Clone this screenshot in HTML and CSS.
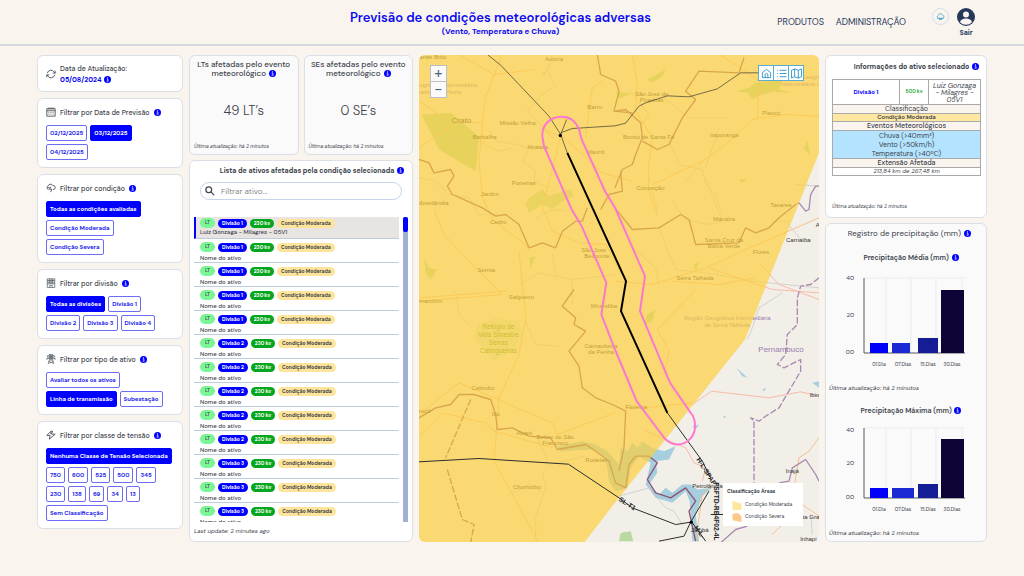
FILE: index.html
```html
<!DOCTYPE html>
<html lang="pt-BR">
<head>
<meta charset="utf-8">
<meta name="viewport" content="width=device-width, initial-scale=1">
<title>Previsão de condições meteorológicas adversas</title>
<link rel="stylesheet" href="styles.css">
</head>
<body>
<svg class="sprite" aria-hidden="true">
  <symbol id="info" viewBox="0 0 12 12"><circle cx="6" cy="6" r="6" fill="#00f"/><circle cx="6" cy="3.2" r="1" fill="#fff"/><path d="M4.6 5.2H6.7V8.6M4.4 8.9H7.8" stroke="#fff" stroke-width="1.2" fill="none"/></symbol>
  <symbol id="refresh" viewBox="0 0 24 24"><path d="M3 10A9.3 9.3 0 0 1 20 7.5L22 10M22 4V10H16M21 14A9.3 9.3 0 0 1 4 16.500L2 14M2 20V14H8"/></symbol>
  <symbol id="calendar" viewBox="0 0 24 24"><path d="M2 4H22V22H2ZM2 9H22M7 1V6M12 1V6M17 1V6M6 13H8M11 13H13M16 13H18M6 17H8M11 17H13M16 17H18"/></symbol>
  <symbol id="storm" viewBox="0 0 24 24"><path d="M6 16A5 5 0 0 1 5 7A6 6 0 0 1 16 6A5 5 0 0 1 19 15.500H17M12 9L8 15H14L11 22M5 11H9"/></symbol>
  <symbol id="building" viewBox="0 0 24 24"><path d="M3 2H21V23H3ZM3 6H21M3 10H21M3 14H21M8 2V14M12 2V14M16 2V14M9 23V18H15V23" stroke-width="1.500"/></symbol>
  <symbol id="tower" viewBox="0 0 24 24"><path d="M3 5L9 1H15L21 5ZM2 11L9 7H15L22 11ZM9 1V11L5 23M15 1V11L19 23M9 1L15 7M15 1L9 7L15 11M15 7L9 11L17 18L5 23M15 11L7 18L19 23M3 5V8M21 5V8M2 11V14M22 11V14" stroke-width="1.300"/></symbol>
  <symbol id="bolt" viewBox="0 0 24 24"><path d="M13 2L2 13H10L8 22L22 10H13L16 2M13 2L11 9"/></symbol>
</svg>

<header class="topbar">
  <div class="topbar-title">
    <h1>Previsão de condições meteorológicas adversas</h1>
    <p>(Vento, Temperatura e Chuva)</p>
  </div>
  <div class="topbar-actions">
    <nav class="menu"><a href="#">PRODUTOS</a><a href="#">ADMINISTRAÇÃO</a></nav>
    <div class="account">
      <button class="cloud-btn" type="button" aria-label="Clima"><svg viewBox="0 0 24 24"><path d="M6 17A4.500 4.500 0 0 1 6 9A6 6 0 0 1 17.500 8.500A4.500 4.500 0 0 1 18.500 17Z" fill="none" stroke="#3a9cc8" stroke-width="2"/><path d="M4 17H20M8 20H16" stroke="#3a9cc8" stroke-width="2"/></svg></button>
      <a class="logout" href="#"><svg viewBox="0 0 24 24"><circle cx="12" cy="12" r="12" fill="#253858"/><circle cx="12" cy="8.500" r="4" fill="#fbf5f1"/><path d="M4 19C5 12.500 19 12.500 20 19C16 23.500 8 23.500 4 19Z" fill="#fbf5f1"/></svg>Sair</a>
    </div>
  </div>
</header>

<main class="dashboard">
  <aside class="filters">
    <section class="card update">
      <svg class="icon"><use href="#refresh"/></svg>
      <div>Data de Atualização:<br><b>05/08/2024</b> <svg class="info"><use href="#info"/></svg></div>
    </section>
    <section class="card filter">
      <h2><svg class="icon"><use href="#calendar"/></svg>Filtrar por Data de Previsão <svg class="info"><use href="#info"/></svg></h2>
      <div class="chips narrow"><button>02/12/2025</button><button class="on">03/12/2025</button><button>04/12/2025</button></div>
    </section>
    <section class="card filter">
      <h2><svg class="icon"><use href="#storm"/></svg>Filtrar por condição <svg class="info"><use href="#info"/></svg></h2>
      <div class="chips stacked"><button class="on">Todas as condições avaliadas</button><button>Condição Moderada</button><button>Condição Severa</button></div>
    </section>
    <section class="card filter">
      <h2><svg class="icon"><use href="#building"/></svg>Filtrar por divisão <svg class="info"><use href="#info"/></svg></h2>
      <div class="chips"><button class="on">Todas as divisões</button><button>Divisão 1</button><button>Divisão 2</button><button>Divisão 3</button><button>Divisão 4</button></div>
    </section>
    <section class="card filter">
      <h2><svg class="icon"><use href="#tower"/></svg>Filtrar por tipo de ativo <svg class="info"><use href="#info"/></svg></h2>
      <div class="chips"><button>Avaliar todos os ativos</button><button class="on">Linha de transmissão</button><button>Subestação</button></div>
    </section>
    <section class="card filter">
      <h2><svg class="icon"><use href="#bolt"/></svg>Filtrar por classe de tensão <svg class="info"><use href="#info"/></svg></h2>
      <div class="chips voltage"><button class="on">Nenhuma Classe de Tensão Selecionada</button><button>750</button><button>600</button><button>525</button><button>500</button><button>345</button><button>230</button><button>138</button><button>69</button><button>34</button><button>13</button><button>Sem Classificação</button></div>
    </section>
  </aside>

  <div class="assets">
    <div class="stats">
      <section class="card stat"><h2>LTs afetadas pelo evento meteorológico <svg class="info"><use href="#info"/></svg></h2><p class="value">49 LT’s</p><p class="stamp">Última atualização: há 2 minutos</p></section>
      <section class="card stat"><h2>SEs afetadas pelo evento meteorológico <svg class="info"><use href="#info"/></svg></h2><p class="value">0 SE’s</p><p class="stamp">Última atualização: há 2 minutos</p></section>
    </div>
    <section class="card list-card">
      <h2>Lista de ativos afetadas pela condição selecionada <svg class="info"><use href="#info"/></svg></h2>
      <label class="search"><svg viewBox="0 0 24 24"><circle cx="9" cy="9" r="7"/><path d="M14 14L22 22"/></svg><input type="text" placeholder="Filtrar ativo..." aria-label="Filtrar ativo"></label>
      <div class="scroller">
        <ul id="asset-list"></ul>
        <div class="track"><div class="thumb"></div></div>
      </div>
      <p class="stamp">Last update: 2 minutes ago</p>
    </section>
  </div>

  <section class="map" aria-label="Mapa">
    <svg class="map-canvas" viewBox="0 0 1200 1464" preserveAspectRatio="xMidYMid slice">
      <rect width="1200" height="1464" fill="#f2efe9"/>
      <g class="green">
        <path d="M8 180L95 175L180 245L170 350L60 285Z"/>
        <path d="M330 430L370 405L390 425L420 415L455 405L465 425L430 440L400 465L370 450L330 475L320 450Z" opacity=".8"/>
        <path d="M180 810L230 790L300 800L310 840L280 890L220 920L190 880L160 850Z" opacity=".3"/>
        <path d="M950 110L990 100L1010 85L1090 75L1080 105L1120 115L1060 112L1030 120L1000 135L985 115Z"/>
        <path d="M370 55L382 48L375 62ZM685 75L740 45L730 65L700 85ZM590 110L640 118L600 132ZM1165 255L1172 300L1155 285ZM960 375L988 372L968 385ZM685 780L710 765L700 800L675 810ZM15 610L30 640L55 645L35 675L20 655ZM330 610L350 605L335 640ZM825 630L840 620L830 650Z"/>
        <path d="M605 1435L635 1430L643 1460L600 1460Z"/>
      </g>
      <g class="water">
        <path d="M415 1175L490 1160L530 1170L565 1190L600 1230L605 1180L625 1190L640 1165L655 1180L670 1160L700 1180L735 1190L770 1175L750 1215L710 1220L715 1255L690 1290L720 1320L740 1300L760 1315L790 1290L815 1290L835 1305L880 1300L850 1325L830 1380L840 1460L820 1460L812 1340L800 1310L760 1345L710 1330L680 1290L695 1225L660 1205L635 1240L625 1300L590 1310L570 1280L560 1210L520 1185L425 1190Z"/>
        <path d="M952 940L975 960L985 970L970 965ZM1180 985L1200 980V1000ZM1030 1005L1042 1000L1035 1010ZM820 1115L840 1110L830 1125ZM912 1085L920 1085L918 1092Z"/>
      </g>
      <g class="minor">
        <path d="M400 0L385 50L410 95L370 120L325 170L370 215L400 250M210 230L230 260L270 265L330 280L310 320L350 350L345 380L390 400M130 190L95 250L180 260L240 290L280 280"/>
        <path d="M0 370L50 380L90 420L150 430L180 480L240 480M350 490L390 470L420 465L440 470M300 690L360 655L460 675L590 660M400 600L410 660M460 670V750M320 800L350 870L420 875M110 710L120 780L150 810M370 1250L380 1300L350 1390V1450M270 1320L330 1290L370 1315M355 1150L390 1230L500 1205"/>
        <path d="M630 105L690 180L670 210M735 130L810 190L930 190M750 260L780 330L850 345L860 390L890 420L900 450L910 475M860 340L880 280L900 220M700 410L715 470L710 490M850 320L800 380M860 370L910 500L870 510L800 495L760 440M720 520L750 600L770 645L900 660M655 590L710 640L720 690M1130 390L1200 395M1060 500L1100 500L1150 560M890 660L1000 680L1100 690L1200 700"/>
        <path d="M600 1325L690 1300L740 1360L765 1370L790 1410M1175 1380L1180 1440M1090 715L1020 760L1000 820L985 855"/>
      </g>
      <g class="roads">
        <path d="M0 280L120 200L190 205L200 125L250 0M120 0L225 60L350 45M190 210L180 320L190 430L225 500L320 570L330 590M0 140L90 200M45 465L75 540L150 620L250 720L0 740M370 225L425 245L388 390L370 460L400 530L480 565L560 570L620 680M425 240L550 355L640 380M500 250L520 100L550 80M640 0L655 90L650 170L700 250L688 340L690 410L710 470M700 390L850 320L920 270L1000 195L1100 180L1200 185M1015 190L1020 80L950 30L900 0M300 590L310 690L320 790L300 900L240 1030L225 1220L360 1465M0 1080L120 985L400 1105L415 1140L588 1075M0 1145L70 1075L200 1105L225 1130L400 1180M588 680L700 690L860 640L970 590L1200 490M760 680L900 690L1010 670M620 1060L680 1060L820 1045M830 705L715 825L750 890L735 960M0 730L130 720L260 710"/>
      </g>
      <g class="pinkroads"><path d="M680 1130L800 1180L825 1225L860 1240L850 1280M820 1050L878 1010L1050 1030L1145 1012L1200 1025M1020 625L1080 690L1200 735M870 640L1060 705L1200 715"/></g>
      <g class="roads"><path d="M1200 1150L1170 1190L1140 1210L1120 1330L1100 1400L1060 1440M1150 1350L1200 1385M830 1460L850 1320L880 1290"/></g>
      <g class="bounds">
        <path d="M0 315L30 325L45 355L95 345L105 365L85 395L100 420L145 440L190 460L230 485L260 480L300 510L330 580L345 575L370 565L410 580L430 530L470 500L490 500L505 460"/>
        <path d="M535 0L545 60L590 80L600 110L585 170L640 175M588 170L620 165L665 205L670 250L650 300L640 330L610 345L588 400M670 260L715 285L750 270L790 190L830 135L800 110L840 50L960 55L975 10"/>
        <path d="M545 465L570 420L610 410L605 350M588 460L640 525L720 520L785 480L810 495L830 570L960 565L980 520L1010 535L1050 520L1080 490L1130 450"/>
        <path d="M465 705L430 755L470 790L465 810L500 830L450 890L480 935L490 1000L530 1030L580 1050L620 1070L615 1180L600 1250"/>
        <path d="M0 1090L50 1060L95 1050L120 1020L165 1020L215 1035L230 1080L235 1125L280 1120L330 1145L395 1150L415 1185L500 1170L530 1190L570 1220L590 1285L620 1300L630 1230L650 1205L690 1205L715 1225L685 1275L710 1315L755 1330L800 1300L830 1340L810 1370L830 1460"/>
        <path class="dash" d="M155 1035L80 1210M85 1245L130 1395L165 1410L155 1465"/>
      </g>
      <g class="violet">
        <path d="M1130 450L1140 445L1160 470L1170 465L1175 420L1190 395L1200 395"/>
        <path class="dash" d="M1200 670L1175 690L1145 695L1135 730V810L1105 840L1100 900L1075 930L1095 940L1145 915V950L1080 1060L1040 1085L1020 1100L995 1090L1005 1100V1330"/>
        <path d="M1080 1285L1110 1280L1120 1240L1160 1215L1190 1260L1200 1280"/>
        <path d="M905 1465L950 1425L985 1415"/>
      </g>
      <g class="places">
        <text x="36" y="12">Farias Brito</text><text x="405" y="20">Aurora</text><text x="527" y="163">Barro</text><text x="127" y="206" font-size="24">Crato</text><text x="296" y="212">Missão Velha</text><text x="197" y="252">Barbalha</text><text x="356" y="283">Abaiara</text><text x="530" y="299">Mauriti</text><text x="314" y="392">Porteiras</text><text x="212" y="424">Jardim</text><text x="42" y="452">Moreilândia</text><text x="238" y="508">Cedro</text><text x="524" y="591">São Jose</text><text x="534" y="609">Belmonte</text><text x="202" y="652">Serrita</text><text x="307" y="732">Salgueiro</text>
        <text x="698" y="123">São José de</text><text x="698" y="141">Piranhas</text><text x="689" y="254">Bonito de Santa Fé</text><text x="916" y="248">Itaporanga</text><text x="1057" y="181">Piancó</text><text x="694" y="406">Conceição</text><text x="1086" y="457">Tavares</text><text x="915" y="500">Manaíra</text><text x="915" y="563">Santa Cruz da</text><text x="915" y="581">Baixa Verde</text><text x="1026" y="598">Flores</text><text x="828" y="677">Serra Talhada</text><text x="1138" y="563">Carnaíba</text>
        <text x="555" y="761">Mirandiba</text><text x="24" y="744">Parnamirim</text><text x="546" y="879">Carnaubeira</text><text x="546" y="897">da Penha</text><text x="192" y="1007">Cabrobó</text><text x="10" y="1074">Orocó</text><text x="231" y="1083">Ibó</text><text x="316" y="1142">Abaré</text><text x="409" y="1152">Belém do São</text><text x="409" y="1170">Francisco</text><text x="532" y="1222">Rodelas</text><text x="324" y="1304">Chorrochó</text><text x="652" y="1062">Floresta</text><text x="865" y="1299">Petrolândia</text><text x="842" y="1433">Jatobá</text><text x="1120" y="1256">Inajá</text><text class="from" x="1172" y="1026">Ibimirim</text><text class="from" x="1126" y="1393">Mata Grande</text><text x="1168" y="1459">Inhapi</text><text class="from" x="1190" y="518">Afogados</text>
      </g>
      <g class="region">
        <text class="to" x="175" y="97">Região Geográfica Intermediária</text><text class="to" x="128" y="118">de Juazeiro do Norte</text>
        <text x="925" y="797">Região Geográfica Intermediária</text><text x="925" y="818">de Serra Talhada</text>
        <text class="from" x="1084" y="73">Região Geográfica</text><text class="from" x="1084" y="94">Intermediária de</text>
        <text x="1086" y="893" font-size="24">Pernambuco</text>
      </g>
      <g class="reserve"><text x="238" y="824">Refúgio de</text><text x="238" y="847">Vida Silvestre</text><text x="238" y="871">Serras</text><text x="238" y="894">Catingueiras</text></g>
      <path d="M0 0H1200V295L1025 735L978 855L588 1345L496 1464H0Z" fill="#fecf3b" opacity=".68"/>
      <g class="lines">
        <path d="M205 0L245 32L390 185L425 240L445 295M425 240L443 195M425 235L460 222L588 214L620 206L660 155L680 145L745 124L810 127L895 103L965 55H1020" opacity=".65"/>
        <path d="M0 1222L180 1212L448 1229L600 1330L640 1360L770 1410L815 1403M745 1075L850 1220L875 1270M720 1460L795 1445L815 1403L870 1310M875 1380H1000M820 1405L860 1460"/>
        <path class="selected" d="M445 295L621 680L606 770L745 1075"/>
        <circle cx="424" cy="243" r="5"/><circle cx="817" cy="1403" r="5"/>
      </g>
      <path class="buffer" d="M428 187C390 187 368 215 370 245L375 275L458 465L488 515L562 685L547 780L588 885L653 1040L728 1140C745 1165 760 1170 775 1170C805 1170 828 1145 828 1115C828 1098 825 1085 815 1075L753 985L663 770L678 665L588 460L558 410L488 255L480 225C470 200 450 187 428 187Z"/>
      <g class="line-names">
        <text transform="translate(832 1215) rotate(58)">H-L-SPAF</text>
        <text transform="translate(886 1283) rotate(90)">FSFTD-RB4F02-4L</text>
        <text transform="translate(598 1338) rotate(33)">SL-T1</text>
        <text transform="translate(825 1420) rotate(55)">H-L-</text>
      </g>
    </svg>
    <div class="zoom"><button type="button">+</button><button type="button">−</button></div>
    <div class="tools">
      <button type="button" aria-label="Início"><svg viewBox="0 0 24 24"><path d="M3 10L12 3L21 10V21H3ZM9 21V15A3 3 0 0 1 15 15V21"/></svg></button>
      <button type="button" aria-label="Legenda"><svg viewBox="0 0 24 24"><path d="M2 5H4M8 5H23M2 12H4M8 12H23M2 19H4M8 19H23"/></svg></button>
      <button type="button" aria-label="Camadas"><svg viewBox="0 0 24 24"><path d="M1 5L8 2L16 5L23 2V19L16 22L8 19L1 22ZM8 2V19M16 5V22"/></svg></button>
    </div>
    <div class="legend">
      <h3>Classificação Áreas</h3>
      <p><svg viewBox="0 0 10 10"><path d="M0 0L10 3V10H0Z" fill="#fde69b"/></svg>Condição Moderada</p>
      <p><svg viewBox="0 0 10 10"><path d="M0 1L6 0L10 4V10L0 8Z" fill="#fdc78a"/></svg>Condição Severa</p>
    </div>
  </section>

  <div class="details">
    <section class="card info-card">
      <h2>Informações do ativo selecionado <svg class="info"><use href="#info"/></svg></h2>
      <table>
        <colgroup><col class="c-div"><col class="c-kv"><col></colgroup>
        <tbody>
          <tr class="asset"><td class="division">Divisão 1</td><td class="kv">500 kv</td><td class="name">Luiz Gonzaga - Milagres - 05V1</td></tr>
          <tr><td class="label" colspan="3">Classificação</td></tr>
          <tr><td class="moderate" colspan="3">Condição Moderada</td></tr>
          <tr><td class="label strong" colspan="3">Eventos Meteorológicos</td></tr>
          <tr><td class="events" colspan="3">Chuva (&gt;40mm³)<br>Vento (&gt;50km/h)<br>Temperatura (&gt;40ºC)</td></tr>
          <tr><td class="label strong" colspan="3">Extensão Afetada</td></tr>
          <tr><td class="extent" colspan="3">213,84 km de 267,48 km</td></tr>
        </tbody>
      </table>
      <p class="stamp">Última atualização: há 2 minutos</p>
    </section>
    <section class="card rain-card">
      <h2>Registro de precipitação (mm) <svg class="info"><use href="#info"/></svg></h2>
      <h3>Precipitação Média (mm) <svg class="info"><use href="#info"/></svg></h3>
      <svg class="chart" viewBox="0 2 148 98" role="img" aria-label="Precipitação média">
        <path class="grid" d="M32 10H133M54 10V85M79 10V85M104 10V85M130 10V85"/>
        <path class="axis" d="M32 10V85H133"/>
        <g class="ticks"><text x="22" y="12">40</text><text x="22" y="49">20</text><text x="22" y="86">00</text></g>
        <path fill="#0000fa" d="M38 75H56V85H38Z"/><path fill="#1c28d4" d="M60 75H78V85H60Z"/><path fill="#141c96" d="M86 70H106V85H86Z"/><path fill="#0f0438" d="M109 22H132V85H109Z"/>
        <g class="days"><text x="47" y="98">01.Dia</text><text x="71" y="98">07.Dias</text><text x="96" y="98">15.Dias</text><text x="120" y="98">30.Dias</text></g>
      </svg>
      <p class="stamp">Última atualização: há 2 minutos</p>
      <h3>Precipitação Máxima (mm) <svg class="info"><use href="#info"/></svg></h3>
      <svg class="chart" viewBox="0 10 148 90" role="img" aria-label="Precipitação máxima">
        <path class="grid" d="M32 15H133M54 15V85M79 15V85M104 15V85M130 15V85"/>
        <path class="axis" d="M32 15V85H133"/>
        <g class="ticks"><text x="22" y="19">40</text><text x="22" y="52">20</text><text x="22" y="86">00</text></g>
        <path fill="#0000fa" d="M38 75H56V85H38Z"/><path fill="#1c28d4" d="M60 75H82V85H60Z"/><path fill="#141c96" d="M86 71H106V85H86Z"/><path fill="#0f0438" d="M109 26H132V85H109Z"/>
        <g class="days"><text x="47" y="98">01.Dia</text><text x="71" y="98">07.Dias</text><text x="96" y="98">15.Dias</text><text x="120" y="98">30.Dias</text></g>
      </svg>
      <p class="stamp">Última atualização: há 2 minutos</p>
    </section>
  </div>
</main>
<script src="assets.js"></script>
</body>
</html>
```
FILE: assets.js
```js
const divisions = [1, 1, 1, 1, 1, 2, 2, 2, 2, 2, 3, 3, 3];
const list = document.getElementById("asset-list");

divisions.forEach((division, i) => {
  const row = document.createElement("li");
  if (i === 0) row.className = "active";
  const name = i === 0 ? "Luiz Gonzaga - Milagres - 05V1" : "Nome do ativo";
  row.innerHTML =
    `<div class="tags"><span class="tag lt">LT</span><span class="tag div">Divisão ${division}</span>` +
    `<span class="tag volt">230 kv</span><span class="tag cond">Condição Moderada</span></div>` +
    `<div class="name">${name}</div>`;
  list.append(row);
});
```
FILE: styles.css
```css
* { box-sizing: border-box; margin: 0; padding: 0; }

body {
  display: flex;
  flex-direction: column;
  min-height: 100vh;
  background: #faf4ef;
  color: #3c434c;
  font: 400 7px/9px "DM Sans", Inter, "Open Sans", sans-serif;
}
button, input { font: inherit; color: inherit; }
a { color: inherit; text-decoration: none; }
.sprite { position: absolute; width: 0; height: 0; }

.topbar {
  display: grid;
  grid-template-columns: 1fr auto 1fr;
  min-height: 46px;
  padding: 8px 49px 0 26px;
  border-bottom: 2px solid #d5d9de;
}
.topbar-title { grid-column: 2; padding-top: 1px; text-align: center; color: #0a0af0; }
.topbar-title h1 { font-size: 13px; line-height: 17px; font-weight: 600; }
.topbar-title p { font-size: 8px; line-height: 10px; font-weight: 700; }
.topbar-actions { display: flex; justify-content: flex-end; gap: 26px; color: #253858; }
.menu { display: flex; gap: 12px; padding-top: 9px; font-size: 9px; line-height: 11px; }
.account { display: flex; align-items: flex-start; gap: 8px; }
.cloud-btn { display: grid; place-items: center; width: 17px; height: 17px; border: 1px solid #d3dbec; border-radius: 50%; background: none; }
.cloud-btn svg { width: 9px; height: 9px; }
.logout { display: flex; flex-direction: column; align-items: center; gap: 2px; font-weight: 700; }
.logout svg { width: 18px; height: 18px; }

.dashboard {
  flex: 1;
  display: grid;
  grid-template-columns: 146px 224px 1fr 162px;
  gap: 6px;
  padding: 9px 37px 34px;
}
.card { border: 1px solid #dadfe8; border-radius: 6px; background: #fff; }
.info { width: 7px; height: 7px; margin-left: 1px; vertical-align: -1px; }
.icon { width: 10px; height: 10px; fill: none; stroke: #3c434c; stroke-width: 2; flex: none; }
h2, h3 { font-size: 7px; line-height: 9px; font-weight: 500; }
.stamp { font-size: 5px; line-height: 6px; font-style: italic; }

.filters { display: flex; flex-direction: column; gap: 6px; }
.update { display: flex; align-items: center; gap: 4px; height: 37px; padding: 0 8px; line-height: 11px; font-weight: 500; }
.update b { color: #0a0af0; font-weight: 700; }
.filter { padding: 8px 6px 7px 8px; }
.filter h2 { display: flex; align-items: center; gap: 4px; height: 10px; margin-bottom: 8px; }
.filter .info { margin-left: 0; }
.chips { display: flex; flex-wrap: wrap; gap: 3px; }
.chips.stacked { flex-direction: column; align-items: flex-start; }
.chips.narrow { padding-right: 20px; }
.chips button {
  height: 16px;
  padding: 0 3px;
  border: 1px solid #6c6cf5;
  border-radius: 2px;
  background: #fff;
  color: #2626ee;
  font-size: 6px;
  line-height: 8px;
  font-weight: 700;
  white-space: nowrap;
}
.chips button.on { border-color: #00f; background: #00f; color: #fff; }
.chips.voltage { padding-right: 12px; }
.chips.voltage button:first-child { margin-right: -12px; }

.assets { display: flex; flex-direction: column; gap: 5px; min-height: 0; }
.stats { display: grid; grid-template-columns: 1fr 1fr; gap: 5px; }
.stat { display: flex; flex-direction: column; height: 100px; padding: 4px; background: #fafafa; }
.stat h2 { font-size: 8px; text-align: center; }
.value { margin: auto; font-size: 13px; line-height: 16px; font-weight: 300; }

.list-card { flex: 1 1 0; display: flex; flex-direction: column; min-height: 200px; padding: 5px 4px 6px; }
.list-card h2 { padding-right: 4px; text-align: right; font-weight: 700; }
.search { display: flex; align-items: center; gap: 6px; height: 18px; margin: 7px 6px 17px; padding: 0 4px; border: 1px solid #c8d3ec; border-radius: 9px; }
.search svg { width: 10px; height: 10px; fill: none; stroke: #3c434c; stroke-width: 3; }
.search input { flex: 1; min-width: 0; border: 0; outline: 0; background: none; font-size: 8px; }
.search input::placeholder { color: #85898f; }
.scroller { flex: 1 1 0; display: flex; justify-content: space-between; min-height: 0; overflow: hidden; }
.scroller ul { width: 205px; list-style: none; }
.scroller li { height: 24px; padding: 3px 0 0 6px; border-bottom: 1px solid #bccbe0; }
.scroller li.active { height: 22px; padding: 1px 0 0 4px; border-left: 2px solid #00f; background: #e8e4e1; }
.name { margin-top: 2px; font-size: 6px; line-height: 9px; font-weight: 500; }
.active .name { margin-top: 0; }
.tags { display: flex; align-items: center; gap: 3px; height: 10px; }
.tag { height: 9px; padding: 0 4px; border-radius: 5px; font-size: 5px; line-height: 9px; font-weight: 700; }
.lt { height: 10px; padding: 0 5px; background: #7bf595; line-height: 10px; font-weight: 500; }
.div { background: #00f; color: #fff; }
.volt { background: #05a51d; color: #fff; }
.cond { background: #fee49a; }
.track { width: 5px; background: #a0b2d4; border-radius: 2px 2px 0 0; }
.thumb { height: 15px; border-radius: 2px; background: #00f; }
.list-card .stamp { padding-top: 6px; font-size: 6px; line-height: 7px; }

.map { position: relative; min-height: 300px; overflow: hidden; border-radius: 6px; }
.map-canvas { position: absolute; width: 100%; height: 100%; }
.map-canvas text { font-family: "Liberation Sans", sans-serif; text-anchor: middle; }
.map-canvas .from { text-anchor: start; }
.map-canvas .to { text-anchor: end; }
.green path { fill: #b9d9a0; }
.water path { fill: #a5cede; }
.minor, .roads, .pinkroads, .bounds, .violet { fill: none; stroke-width: 3; stroke-linejoin: round; }
.minor { stroke: #c6c3be; stroke-width: 2; }
.roads { stroke: #f8c08a; }
.pinkroads { stroke: #f6bba8; }
.bounds { stroke: #8f5370; stroke-width: 4; }
.violet { stroke: #a98ab0; stroke-width: 4; }
.dash { stroke-dasharray: 20 6; }
.places { fill: #333; font-size: 18px; }
.region { fill: #9a7bab; font-size: 18px; }
.reserve { fill: #5d9a1e; font-size: 20px; }
.lines path { fill: none; stroke: #2e2e2a; stroke-width: 3; }
.lines .selected { stroke: #000; stroke-width: 6; }
.buffer { fill: none; stroke: #fc78d0; stroke-width: 6; }
.map-canvas .line-names text { fill: #222; font-size: 20px; font-weight: 700; text-anchor: start; }

.zoom { position: absolute; top: 10px; left: 11px; display: grid; gap: 1px; border: 1px solid #b9c0c6; background: #b9c0c6; }
.zoom button { width: 15px; height: 15px; border: 0; background: #fafafa; color: #4c6276; font-size: 15px; line-height: 15px; }
.tools { position: absolute; top: 10px; right: 15px; display: flex; gap: 1px; border: 1px solid #5aaed2; background: #5aaed2; }
.tools button { display: grid; place-items: center; width: 14px; height: 14px; border: 0; background: #fff; }
.tools svg { width: 11px; height: 11px; fill: none; stroke: #2a93c8; stroke-width: 2; }
.legend { position: absolute; right: 16px; bottom: 16px; width: 80px; padding: 5px 4px 3px; background: #fff; }
.legend h3 { margin-bottom: 4px; font-size: 5px; line-height: 7px; font-weight: 800; }
.legend p { display: flex; align-items: center; gap: 3px; height: 12px; padding-left: 5px; font-size: 5px; line-height: 6px; }
.legend svg { width: 10px; height: 9px; }

.details { display: flex; flex-direction: column; gap: 5px; min-width: 0; }
.info-card { display: flex; flex-direction: column; height: 163px; padding: 6px 5px 7px 6px; }
.info-card h2 { margin-bottom: 8px; padding-right: 2px; text-align: right; font-weight: 700; }
.info-card .stamp { margin-top: auto; }
table { width: 100%; table-layout: fixed; border-collapse: collapse; text-align: center; font-size: 7px; line-height: 8px; }
.c-div { width: 67px; }
.c-kv { width: 29px; }
td { border: 1px solid #a9a9a9; }
.asset td { height: 25px; }
.division { color: #00f; font-size: 6px; font-weight: 700; }
.kv { color: #11a92b; font-size: 5px; font-weight: 600; }
td.name, .extent { font-style: italic; }
td.name { padding: 0 4px; font-size: 7px; line-height: 7px; font-weight: 400; }
.label { background: #faf4ef; }
.strong { font-weight: 500; }
.moderate { background: #fee7a0; font-size: 6px; line-height: 7px; font-weight: 600; }
.events { background: #b3e3fe; line-height: 9px; }
.extent { font-size: 6px; line-height: 7px; }

.rain-card { flex: 1; display: flex; flex-direction: column; padding: 5px 3px 4px; background: #fafafa; }
.rain-card h2 { margin-bottom: 15px; padding-right: 12px; font-size: 8px; text-align: right; font-weight: 400; }
.rain-card h3 { padding-left: 10px; text-align: center; font-weight: 600; }
.rain-card .stamp { font-size: 6px; line-height: 8px; }
.rain-card .stamp + h3 { margin-top: auto; }
.chart { display: block; width: 100%; max-width: 148px; align-self: center; margin: 8px 0 16px; }
.grid { fill: none; stroke: #e9ebee; }
.axis { fill: none; stroke: #55585c; }
.chart text { font-size: 6px; fill: #3c434c; text-anchor: end; }
.chart .days text { font-size: 5px; text-anchor: middle; }
```
